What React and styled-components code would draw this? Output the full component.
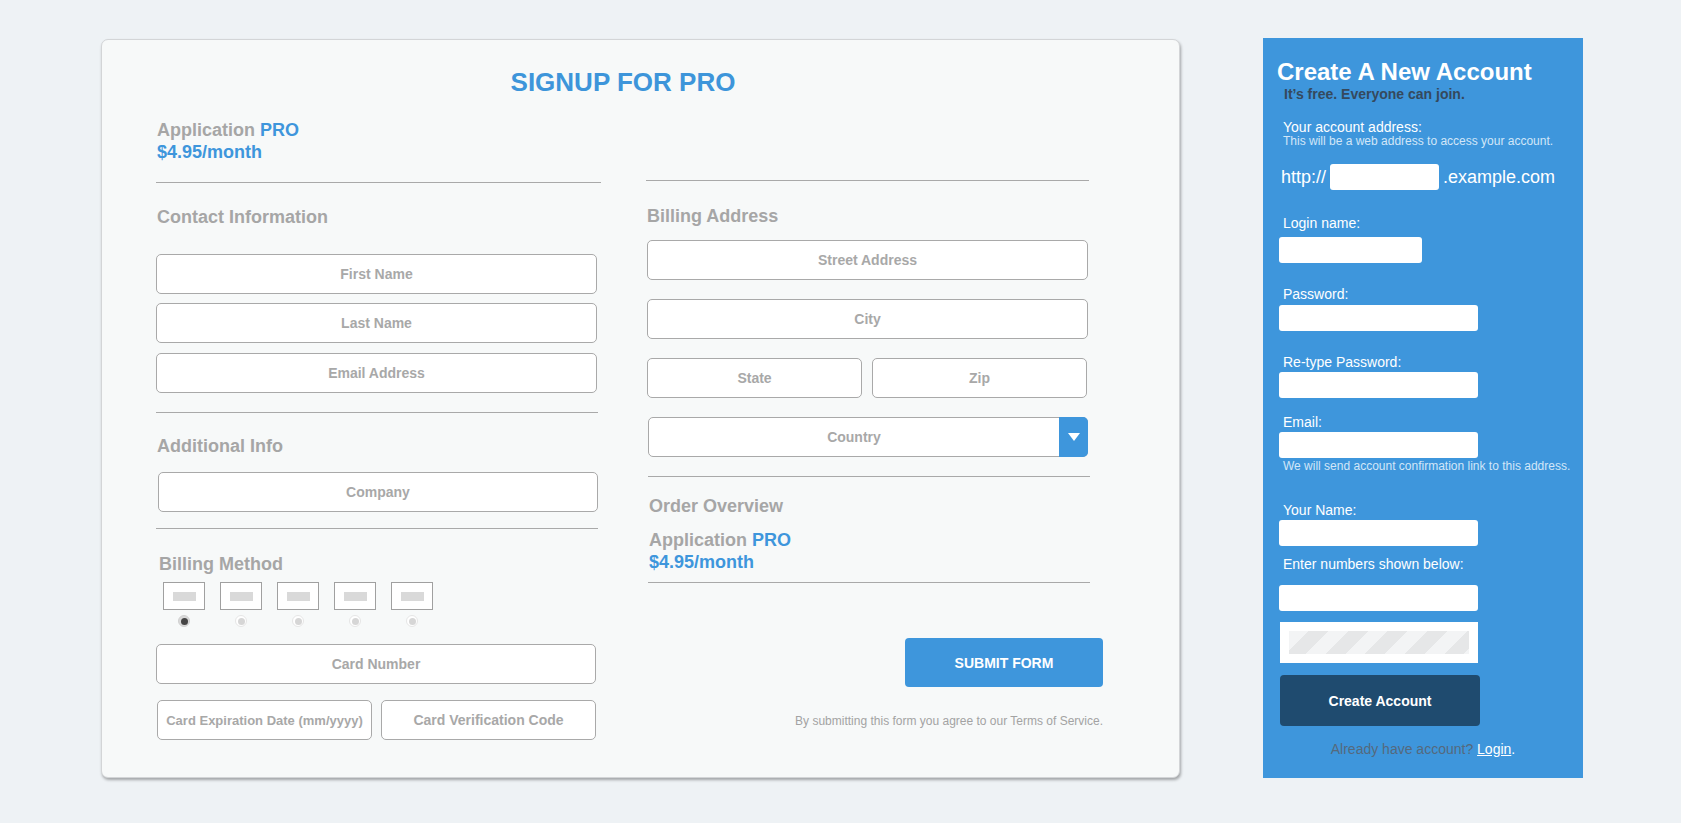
import React from "react";
import styled, { createGlobalStyle } from "styled-components";

const GlobalStyle = createGlobalStyle`
  html, body { margin: 0; padding: 0; background: #eef2f5; }
  body { font-family: "Liberation Sans", Arial, Helvetica, sans-serif; }
  * { box-sizing: border-box; }
`;

const BLUE = "#3e96dc";
const GRAY = "#a6a6a6";

const Page = styled.div`
  display: flex;
  align-items: flex-start;
  gap: 83px;
  width: 1681px;
  min-height: 823px;
  padding: 38px 0 0 101px;
`;

/* ---------- Signup card ---------- */
const Card = styled.section`
  width: 1079px;
  height: 739px;
  margin-top: 1px;
  background: #f7f9f9;
  border: 1px solid #d3d5d7;
  border-radius: 7px;
  box-shadow: 1px 2px 3px rgba(0, 0, 0, 0.32);
  padding: 27px 89px 0 54px;
`;

const Title = styled.h1`
  margin: 0;
  font-size: 26px;
  line-height: 30px;
  font-weight: 700;
  color: #3d95da;
  text-align: center;
`;

const Plan = styled.div`
  margin-top: ${(p) => p.$top}px;
  margin-left: ${(p) => p.$left || 0}px;
  font-size: 18px;
  line-height: 22px;
  font-weight: 700;
  color: ${GRAY};
`;

const Blue = styled.span`
  color: ${BLUE};
`;

const Columns = styled.div`
  display: grid;
  grid-template-columns: 445px 444px;
  column-gap: 45px;
  align-items: start;
`;

const Column = styled.div`
  display: flex;
  flex-direction: column;
  align-items: flex-start;
`;

const Divider = styled.hr`
  margin: ${(p) => p.$top}px 0 0 ${(p) => p.$left || 0}px;
  border: 0;
  height: 1px;
  width: ${(p) => p.$w || 442}px;
  background: #a9a9a9;
`;

const SectionTitle = styled.h2`
  margin: ${(p) => p.$top}px 0 0 ${(p) => p.$left || 0}px;
  font-size: 18px;
  line-height: 22px;
  font-weight: 700;
  color: ${GRAY};
`;

const Field = styled.input`
  display: block;
  width: ${(p) => p.$w || 441}px;
  height: 40px;
  margin: ${(p) => p.$top || 0}px 0 0 ${(p) => p.$left || 0}px;
  padding: 0 4px;
  background: #fff;
  border: 1px solid #a9a9a9;
  border-radius: 5px;
  font-family: inherit;
  font-size: ${(p) => p.$fs || 14}px;
  font-weight: 700;
  color: #555;
  text-align: center;
  outline: none;
  &::placeholder {
    color: #a8a8a8;
    opacity: 1;
  }
`;

const Row = styled.div`
  display: flex;
  gap: ${(p) => p.$gap}px;
  margin: ${(p) => p.$top}px 0 0 ${(p) => p.$left || 0}px;
`;

const Select = styled.div`
  display: flex;
  width: 440px;
  height: 40px;
  margin: ${(p) => p.$top}px 0 0 2px;
  background: #fff;
  border: 1px solid #a9a9a9;
  border-radius: 5px;
`;

const SelectText = styled.div`
  flex: 1;
  display: flex;
  align-items: center;
  justify-content: center;
  font-size: 14px;
  font-weight: 700;
  color: #a8a8a8;
`;

const SelectArrow = styled.div`
  width: 29px;
  margin: -1px -1px -1px 0;
  background: ${BLUE};
  border-radius: 0 5px 5px 0;
  display: flex;
  align-items: center;
  justify-content: center;
`;

const MethodOption = styled.label`
  display: flex;
  flex-direction: column;
  align-items: center;
  gap: 5px;
`;

const CardIcon = styled.span`
  width: 42px;
  height: 28px;
  background: #fff;
  border: 1px solid #a0a0a0;
  display: flex;
  align-items: center;
  justify-content: center;
  &::after {
    content: "";
    width: 23px;
    height: 9px;
    background: #d9d9d9;
  }
`;

const Radio = styled.span`
  width: 12px;
  height: 12px;
  border-radius: 50%;
  background: ${(p) => (p.$checked ? "#d9d9d9" : "#fff")};
  border: 1px solid ${(p) => (p.$checked ? "#d0d0d0" : "#e6e6e6")};
  display: flex;
  align-items: center;
  justify-content: center;
  &::after {
    content: "";
    width: 7px;
    height: 7px;
    border-radius: 50%;
    background: ${(p) => (p.$checked ? "#454545" : "#d6d6d6")};
  }
`;

const SubmitArea = styled.div`
  align-self: flex-end;
  margin: 55px -13px 0 0;
  display: flex;
  flex-direction: column;
  align-items: flex-end;
`;

const SubmitButton = styled.button`
  width: 198px;
  height: 49px;
  border: 0;
  border-radius: 4px;
  background: ${BLUE};
  color: #fff;
  font-family: inherit;
  font-size: 14px;
  font-weight: 700;
`;

const Terms = styled.p`
  margin: 27px 0 0;
  font-size: 12px;
  line-height: 14px;
  color: #a3a3a3;
`;

/* ---------- Create account panel ---------- */
const Panel = styled.aside`
  width: 320px;
  height: 740px;
  background: ${BLUE};
  padding: 20px 16px 0 16px;
  color: #fff;
`;

const PanelTitle = styled.h2`
  margin: 0 0 0 -2px;
  font-size: 24px;
  line-height: 28px;
  font-weight: 700;
`;

const Tagline = styled.p`
  margin: 0 0 0 5px;
  font-size: 14px;
  line-height: 16px;
  font-weight: 700;
  color: #35495d;
`;

const Label = styled.div`
  margin: ${(p) => p.$top}px 0 0 4px;
  font-size: 14px;
  line-height: 16px;
`;

const Hint = styled.div`
  margin: ${(p) => p.$top || 0}px 0 0 4px;
  font-size: 12px;
  line-height: 14px;
  color: #d2e6f8;
  white-space: nowrap;
`;

const UrlRow = styled.div`
  display: flex;
  align-items: center;
  gap: 4px;
  height: 26px;
  margin-top: 16px;
  font-size: 18px;
  line-height: 21px;
  white-space: nowrap;
`;

const UrlText = styled.span`
  margin-left: ${(p) => p.$left || 0}px;
`;

const TextBox = styled.input`
  display: block;
  width: ${(p) => p.$w || 199}px;
  height: 26px;
  margin-top: ${(p) => p.$top || 0}px;
  border: 0;
  border-radius: 3px;
  background: #fff;
  outline: none;
  font-family: inherit;
  font-size: 14px;
  padding: 0 6px;
`;

const Captcha = styled.div`
  width: 198px;
  height: 41px;
  margin: 11px 0 0 1px;
  padding: 9px;
  background: #fff;
`;

const Stripes = styled.div`
  height: 100%;
  background: repeating-linear-gradient(
    135deg,
    #f3f4f5 0px,
    #f3f4f5 14px,
    #e6e7e8 14px,
    #e6e7e8 28px
  );
`;

const CreateButton = styled.button`
  display: block;
  width: 200px;
  height: 51px;
  margin: 12px 0 0 1px;
  border: 0;
  border-radius: 4px;
  background: #1f4b6f;
  color: #fff;
  font-family: inherit;
  font-size: 14px;
  font-weight: 700;
`;

const LoginNote = styled.p`
  margin: 15px 0 0;
  text-align: center;
  font-size: 14px;
  line-height: 16px;
  color: #55697d;
`;

const LoginLink = styled.a`
  color: #fff;
  text-decoration: underline;
`;

const White = styled.span`
  color: #fff;
`;

const methods = [true, false, false, false, false];

export default function App() {
  return (
    <>
      <GlobalStyle />
      <Page>
        <Card>
          <Title>SIGNUP FOR PRO</Title>
          <Plan $top={22} $left={1}>
            Application <Blue>PRO</Blue>
            <br />
            <Blue>$4.95/month</Blue>
          </Plan>
          <Columns>
            <Column>
              <Divider $top={19} $w={445} />
              <SectionTitle $top={23} $left={1}>Contact Information</SectionTitle>
              <Field $top={26} placeholder="First Name" />
              <Field $top={9} placeholder="Last Name" />
              <Field $top={10} placeholder="Email Address" />
              <Divider $top={19} />
              <SectionTitle $top={22} $left={1}>Additional Info</SectionTitle>
              <Field $top={15} $left={2} $w={440} placeholder="Company" />
              <Divider $top={16} />
              <SectionTitle $top={24} $left={3}>Billing Method</SectionTitle>
              <Row $gap={15} $top={7} $left={7}>
                {methods.map((checked, i) => (
                  <MethodOption key={i}>
                    <CardIcon />
                    <Radio $checked={checked} />
                  </MethodOption>
                ))}
              </Row>
              <Field $top={17} $w={440} placeholder="Card Number" />
              <Row $gap={9} $top={16} $left={1}>
                <Field $w={215} $fs={13} placeholder="Card Expiration Date (mm/yyyy)" />
                <Field $w={215} placeholder="Card Verification Code" />
              </Row>
            </Column>
            <Column>
              <Divider $top={17} $w={443} />
              <SectionTitle $top={24} $left={1}>Billing Address</SectionTitle>
              <Field $top={13} $left={1} placeholder="Street Address" />
              <Field $top={19} $left={1} placeholder="City" />
              <Row $gap={10} $top={19} $left={1}>
                <Field $w={215} placeholder="State" />
                <Field $w={215} placeholder="Zip" />
              </Row>
              <Select $top={19}>
                <SelectText>Country</SelectText>
                <SelectArrow>
                  <svg width="12" height="8" viewBox="0 0 12 8">
                    <polygon points="0,0 12,0 6,8" fill="#fff" />
                  </svg>
                </SelectArrow>
              </Select>
              <Divider $top={19} $left={2} $w={442} />
              <SectionTitle $top={18} $left={3}>Order Overview</SectionTitle>
              <Plan $top={12} $left={3}>
                Application <Blue>PRO</Blue>
                <br />
                <Blue>$4.95/month</Blue>
              </Plan>
              <Divider $top={9} $left={2} $w={442} />
              <SubmitArea>
                <SubmitButton>SUBMIT FORM</SubmitButton>
                <Terms>By submitting this form you agree to our Terms of Service.</Terms>
              </SubmitArea>
            </Column>
          </Columns>
        </Card>

        <Panel>
          <PanelTitle>Create A New Account</PanelTitle>
          <Tagline>It’s free. Everyone can join.</Tagline>
          <Label $top={17}>Your account address:</Label>
          <Hint $top={-1}>This will be a web address to access your account.</Hint>
          <UrlRow>
            <UrlText $left={2}>http://</UrlText>
            <TextBox $w={109} />
            <UrlText>.example.com</UrlText>
          </UrlRow>
          <Label $top={25}>Login name:</Label>
          <TextBox $top={6} $w={143} />
          <Label $top={23}>Password:</Label>
          <TextBox $top={3} type="password" />
          <Label $top={23}>Re-type Password:</Label>
          <TextBox $top={2} type="password" />
          <Label $top={16}>Email:</Label>
          <TextBox $top={2} />
          <Hint $top={1}>We will send account confirmation link to this address.</Hint>
          <Label $top={29}>Your Name:</Label>
          <TextBox $top={2} />
          <Label $top={10}>Enter numbers shown below:</Label>
          <TextBox $top={13} />
          <Captcha>
            <Stripes />
          </Captcha>
          <CreateButton>Create Account</CreateButton>
          <LoginNote>
            Already have account? <LoginLink href="#">Login</LoginLink>
            <White>.</White>
          </LoginNote>
        </Panel>
      </Page>
    </>
  );
}
